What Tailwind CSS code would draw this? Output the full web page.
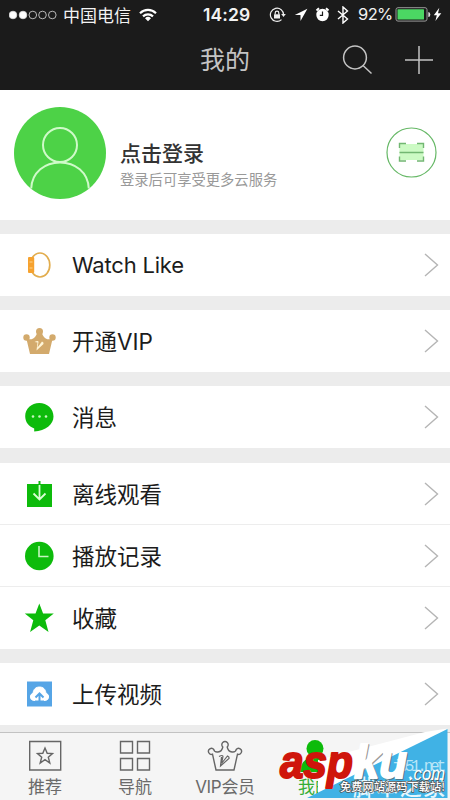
<!DOCTYPE html>
<html lang="zh-CN">
<head>
<meta charset="utf-8">
<title>我的</title>
<script src="https://cdn.jsdelivr.net/npm/@tailwindcss/browser@4"></script>
</head>
<body class="w-[450px] h-[800px] overflow-hidden bg-[#ececec] font-[Inter,'Noto_Sans_CJK_SC',sans-serif] text-[#1c1c1c]">
<div class="relative flex flex-col w-[450px] h-[800px]">
  <header class="h-[90px] shrink-0 bg-[#1b1b1b] text-[#f2f2f2]">
    <div class="flex h-[29px] items-center pl-[9px] pr-[6px]">
      <svg class="w-[48px] h-[10px] shrink-0" viewBox="0 0 48 10" fill="none" stroke="#ddd" stroke-width="0.8"><circle cx="4" cy="5" r="3.8" fill="#fff"/><circle cx="14" cy="5" r="3.8" fill="#fff"/><circle cx="23.8" cy="5" r="3.8"/><circle cx="33.5" cy="5" r="3.8"/><circle cx="43.3" cy="5" r="3.8"/></svg>
      <span class="ml-[6px] w-[68px] pt-[3px] text-[17px] leading-none whitespace-nowrap">中国电信</span>
      <svg class="ml-[8px] w-[18px] h-[14px] shrink-0" viewBox="0 0 18 14" fill="none" stroke="#fff" stroke-width="2.2"><path d="M1 5.2a11.5 11.5 0 0 1 16 0M4 8.4a7.3 7.3 0 0 1 10 0"/><path d="M9 13.2 6 10.3a4.3 4.3 0 0 1 6 0z" fill="#fff" stroke="none"/></svg>
      <span class="ml-[46px] w-[50px] text-[17.5px] font-semibold leading-none tracking-[0.1px]">14:29</span>
      <svg class="ml-[16px] w-[17px] h-[16px] shrink-0" viewBox="0 0 17 16" fill="none" stroke="#eee" stroke-width="1.2"><path d="M12.5 12.6A6.6 6.6 0 1 1 14.6 8"/><path d="M12.2 7h4.6l-2.3 3z" fill="#eee" stroke="none"/><path d="M5 7.3h6v4.2H5z" fill="#eee" stroke="none"/><path d="M6.2 7.5V6a1.8 1.8 0 0 1 3.6 0v1.5"/></svg>
      <svg class="ml-[8px] w-[14px] h-[14px] shrink-0" viewBox="0 0 14 14"><path d="M13.4.8.8 7h5.7v6z" fill="#fff"/></svg>
      <svg class="ml-[7px] w-[15px] h-[15px] shrink-0" viewBox="0 0 15 15"><circle cx="7.5" cy="8" r="6.2" fill="#fff"/><path d="M1.5 3.5 4 1.3M13.5 3.5 11 1.3" stroke="#fff" stroke-width="2"/><path d="M7.5 4.5V8.3H4.8" stroke="#1b1b1b" stroke-width="1.2" fill="none"/></svg>
      <svg class="ml-[7px] w-[12px] h-[18px] shrink-0" viewBox="0 0 12 18" fill="none" stroke="#fff" stroke-width="1.4"><path d="m1 5 9.5 8L6 17V1l4.500 4L1 13"/></svg>
      <span class="ml-[9px] w-[35px] text-[16.5px] leading-none tracking-[-0.6px] whitespace-nowrap">92%</span>
      <svg class="ml-[2px] w-[36px] h-[15px] shrink-0" viewBox="0 0 36 15"><rect x="1" y=".7" width="31" height="13.4" rx="2" fill="none" stroke="#999" stroke-width="1"/><rect x="2.500" y="2.2" width="26.500" height="10.400" rx=".5" fill="#4bd763"/><path d="M33.300 5q2 0 2 2.500t-2 2.500z" fill="#ddd"/></svg>
      <svg class="ml-[2px] w-[9px] h-[15px] shrink-0" viewBox="0 0 9 15"><path d="M6.300.8.800 8.200h3L2.400 14 8.300 6.300H5z" fill="#fff"/></svg>
    </div>
    <div class="grid h-[61px] grid-cols-[1fr_50px_1fr] items-center text-[#c4c4c4]">
      <span></span>
      <h1 class="pt-[2px] text-[25px] leading-none text-center whitespace-nowrap">我的</h1>
      <div class="flex justify-end gap-[31px] pr-[16px]">
        <svg class="w-[31px] h-[30px]" viewBox="0 0 31 30" fill="none" stroke="#c4c4c4" stroke-width="1.500"><circle cx="13" cy="12.500" r="11.400"/><path d="m21 20.500 8.500 8"/></svg>
        <svg class="w-[30px] h-[30px]" viewBox="0 0 30 30" stroke="#c4c4c4" stroke-width="1.500"><path d="M1 15h28M15 1v28"/></svg>
      </div>
    </div>
  </header>

  <main class="flex flex-col gap-[14px] h-[642px] shrink-0">
    <section class="flex h-[130px] shrink-0 bg-white pl-[14px] pr-[13px]">
      <svg class="mt-[17px] w-[92px] h-[92px] shrink-0" viewBox="0 0 92 92"><circle cx="46" cy="46" r="46" fill="#4dd247"/><g fill="none" stroke="#cffac9" stroke-width="2"><circle cx="46" cy="38" r="17"/><path d="M17.200 81.500C18 65 31 55.500 46 55.500S74 65 74.800 81.500"/></g></svg>
      <div class="ml-[14px] flex-1 pt-[52px]">
        <div class="text-[21px] font-medium leading-[24px] text-[#333]">点击登录</div>
        <div class="mt-[5px] text-[14.300px] leading-[18px] text-[#999]">登录后可享受更多云服务</div>
      </div>
      <svg class="mt-[37px] w-[51px] h-[51px] shrink-0" viewBox="0 0 51 51" fill="none"><circle cx="25.500" cy="25.500" r="24.500" stroke="#66b866" stroke-width="1.200"/><path d="M13.500 17h24v16h-24z" fill="#ccfac4"/><path d="M13.500 21v-4.500H20M31 16.500h6.500V21M13.500 29.500V34H20M31 34h6.500v-4.500M13.500 25.500h24" stroke="#72b772" stroke-width="1.400"/></svg>
    </section>

    <a class="flex h-[62px] shrink-0 items-center bg-white pl-[23px] pr-[11px]">
      <svg class="w-[32px] h-[32px]" viewBox="0 0 32 32"><ellipse cx="17" cy="16" rx="9.800" ry="12" fill="none" stroke="#e2ad4e" stroke-width="1.700"/><rect x="5" y="8" width="6.200" height="16" rx="1" fill="#f6a22f"/><path d="M6.500 13h3M6.500 19h3" stroke="#ffd28a"/></svg>
      <span class="ml-[17px] flex-1 text-[22px] leading-none tracking-[-0.2px]">Watch Like</span>
      <svg class="w-[15px] h-[26px]" viewBox="0 0 15 26" fill="none" stroke="#b5b5b5" stroke-width="1.400"><path d="m1 2 12.500 11L1 24"/></svg>
    </a>
    <a class="flex h-[62px] shrink-0 items-center bg-white pl-[23px] pr-[11px]">
      <svg class="w-[34px] h-[32px]" viewBox="0 0 34 32"><g fill="#d3aa6c"><circle cx="16.500" cy="6.500" r="3.500"/><circle cx="3.500" cy="12.500" r="3.200"/><circle cx="29.500" cy="12.500" r="3.200"/><path d="M3 12c4 4 9 3 11.500-5h4C21 15 26 16 30 12l-4 17H7z"/></g><path d="M11.500 17q4-2 4 0l-1 5.500 4.500-6q2 .5 1.500 2.500l-7 6.500 1-8z" fill="#fff6d8"/></svg>
      <span class="ml-[15px] flex-1 pt-[2px] text-[22.500px] leading-none">开通VIP</span>
      <svg class="w-[15px] h-[26px]" viewBox="0 0 15 26" fill="none" stroke="#b5b5b5" stroke-width="1.400"><path d="m1 2 12.500 11L1 24"/></svg>
    </a>
    <a class="flex h-[62px] shrink-0 items-center bg-white pl-[23px] pr-[11px]">
      <svg class="w-[32px] h-[32px]" viewBox="0 0 32 32"><path d="M16.300 2C8.500 2 2.200 7.800 2.200 15.200c0 5.800 3.500 10.200 9 12.200v3c11.500-.7 19.300-7 19.300-15C30.500 7.800 24 2 16.300 2z" fill="#0dbb0b"/><g fill="#c8f5c0"><circle cx="10" cy="15.500" r="1.300"/><circle cx="16.500" cy="15.500" r="1.300"/><circle cx="23" cy="15.500" r="1.300"/></g></svg>
      <span class="ml-[17px] flex-1 pt-[3px] text-[22.500px] leading-none">消息</span>
      <svg class="w-[15px] h-[26px]" viewBox="0 0 15 26" fill="none" stroke="#b5b5b5" stroke-width="1.400"><path d="m1 2 12.500 11L1 24"/></svg>
    </a>
    <section class="mt-px flex h-[186px] shrink-0 flex-col divide-y divide-[#ededed] bg-white">
      <a class="flex h-[62px] items-center pl-[23px] pr-[11px]">
        <svg class="w-[32px] h-[32px]" viewBox="0 0 32 32"><path d="M4 6h25v23H4z" fill="#0dbb0b"/><path d="M16.500 3v4" stroke="#0dbb0b" stroke-width="2"/><path d="M16.500 7v14M10.500 15.500l6 6 6-6" fill="none" stroke="#d9ffd4" stroke-width="1.800"/></svg>
        <span class="ml-[17px] flex-1 pt-[3px] text-[22.500px] leading-none">离线观看</span>
        <svg class="w-[15px] h-[26px]" viewBox="0 0 15 26" fill="none" stroke="#b5b5b5" stroke-width="1.400"><path d="m1 2 12.500 11L1 24"/></svg>
      </a>
      <a class="flex h-[62px] items-center pl-[23px] pr-[11px]">
        <svg class="w-[32px] h-[32px]" viewBox="0 0 32 32"><circle cx="16.300" cy="16" r="14.300" fill="#0dbb0b"/><path d="M16 6v10.500h9.500" fill="none" stroke="#c5f5bf" stroke-width="1.600"/></svg>
        <span class="ml-[17px] flex-1 pt-[3px] text-[22.500px] leading-none">播放记录</span>
        <svg class="w-[15px] h-[26px]" viewBox="0 0 15 26" fill="none" stroke="#b5b5b5" stroke-width="1.400"><path d="m1 2 12.500 11L1 24"/></svg>
      </a>
      <a class="flex h-[62px] items-center pl-[23px] pr-[11px]">
        <svg class="w-[32px] h-[32px]" viewBox="0 0 32 32"><path d="m16.300 1.500 3.800 10h10.700l-8.500 6.800 3.200 11.700-9.200-6.500L7.100 30l3.200-11.700-8.500-6.800h10.700z" fill="#0dbb0b"/></svg>
        <span class="ml-[17px] flex-1 pt-[3px] text-[22.500px] leading-none">收藏</span>
        <svg class="w-[15px] h-[26px]" viewBox="0 0 15 26" fill="none" stroke="#b5b5b5" stroke-width="1.400"><path d="m1 2 12.500 11L1 24"/></svg>
      </a>
    </section>
    <a class="flex h-[62px] shrink-0 items-center bg-white pl-[23px] pr-[11px]">
      <svg class="w-[32px] h-[32px]" viewBox="0 0 32 32"><path d="M4 3.500h25v25H4z" fill="#56a5e6"/><path d="M12 22.500h-1.500a3.700 3.700 0 0 1-.5-7.200C10.500 11 13 9 16.500 9s6 2 6.500 6.300a3.700 3.700 0 0 1-.5 7.200H21" fill="#fff" stroke="#fff"/><path d="M16.500 25v-8M12.500 19.500l4-4 4 4" fill="none" stroke="#56a5e6" stroke-width="2"/></svg>
      <span class="ml-[17px] flex-1 pt-[2px] text-[22.500px] leading-none">上传视频</span>
      <svg class="w-[15px] h-[26px]" viewBox="0 0 15 26" fill="none" stroke="#b5b5b5" stroke-width="1.400"><path d="m1 2 12.500 11L1 24"/></svg>
    </a>
  </main>

  <nav class="grid h-[68px] shrink-0 grid-cols-5 border-t border-[#c2c2c2] bg-[#f5f5f5] text-[17px] leading-[20px] text-[#6a6a6a]">
    <div class="flex flex-col items-center pt-[7px]">
      <svg class="w-[34px] h-[32px]" viewBox="0 0 34 32" fill="none" stroke="#666" stroke-width="1.400"><path d="M1.700 1.500h31v28.500h-31z"/><path d="m17 8 2.200 5.300 5.300.3-4.200 3.600 1.500 5.800-4.800-3.300-4.800 3.300 1.500-5.800-4.200-3.600 5.300-.3z"/></svg>
      <span class="mt-[5px]">推荐</span>
    </div>
    <div class="flex flex-col items-center pt-[7px]">
      <svg class="w-[32px] h-[32px]" viewBox="0 0 32 32" fill="none" stroke="#666" stroke-width="1.400"><path d="M1.500 1.500h12v11.500h-12zM18.500 1.500h12v11.500h-12zM1.500 18.500h12V30h-12zM18.500 18.500h12V30h-12z"/></svg>
      <span class="mt-[5px]">导航</span>
    </div>
    <div class="flex flex-col items-center pt-[7px]">
      <svg class="w-[36px] h-[32px]" viewBox="0 0 36 32" fill="none" stroke="#666" stroke-width="1.400"><path d="M9 30 5.500 14.200A3 3 0 1 1 6.800 9.500c.6 3.500 7.700 4 9-2.500a3.200 3.200 0 1 1 4.400 0c1.300 6.500 8.400 6 9 2.500a3 3 0 1 1 1.300 4.700L27 30z"/><path d="M12 16.500q4-2 4 0l-1.500 7 6-7.500q2 1 1.500 2.500L13.500 26l1-9" stroke-width="1.200"/></svg>
      <span class="mt-[5px] whitespace-nowrap tracking-[-0.3px]">VIP会员</span>
    </div>
    <div class="flex flex-col items-center pt-[7px] text-[#35ad35]">
      <svg class="w-[36px] h-[32px]" viewBox="0 0 36 32" fill="#0dbb0b"><circle cx="18" cy="8.500" r="8.500"/><path d="M3 32c0-10 7-15 15-15s15 5 15 15z"/></svg>
      <span class="mt-[5px]">我的</span>
    </div>
    <div></div>
  </nav>

  <svg class="absolute left-[270px] top-[725px] w-[180px] h-[75px]" viewBox="270 725 180 75">
    <path d="M447.500 728.500 425 732 318 760v37h40z" fill="#fff"/>
    <path d="M447.500 729v69H307z" fill="#40b2e5"/>
    <g font-family="'Liberation Mono','Noto Sans CJK SC',monospace" fill="#b9e6f8">
      <text x="392" y="771" font-size="16" textLength="54">jb51.net</text>
      <text x="353" y="795" font-size="22" font-weight="500" fill="#e5f7fd" textLength="92">脚本之家</text>
    </g>
    <g font-family="'Liberation Sans',sans-serif" font-style="italic" font-weight="700" font-size="47" stroke-width="2" stroke-linejoin="round">
      <text x="355" y="779" fill="#555" stroke="#555" opacity=".6" textLength="53" lengthAdjust="spacingAndGlyphs">ku</text>
      <text x="280" y="778" fill="#cf150b" stroke="#cf150b" textLength="73" lengthAdjust="spacingAndGlyphs">asp</text>
      <text x="354" y="778" fill="#fff" stroke="#fff" textLength="53" lengthAdjust="spacingAndGlyphs">ku</text>
    </g>
    <g font-family="'Liberation Sans',sans-serif" font-style="italic" font-size="19"><text x="410" y="781" fill="#4a6570" textLength="36" lengthAdjust="spacingAndGlyphs">.com</text><text x="409" y="780" fill="#fff" textLength="36" lengthAdjust="spacingAndGlyphs">.com</text></g>
    <text x="340" y="791" font-family="'Noto Sans CJK SC',sans-serif" font-size="11" font-weight="500" fill="#fff" stroke="#555" stroke-width="1.500" paint-order="stroke" textLength="105">免费网站源码下载站!</text>
  </svg>
</div>
</body>
</html>
